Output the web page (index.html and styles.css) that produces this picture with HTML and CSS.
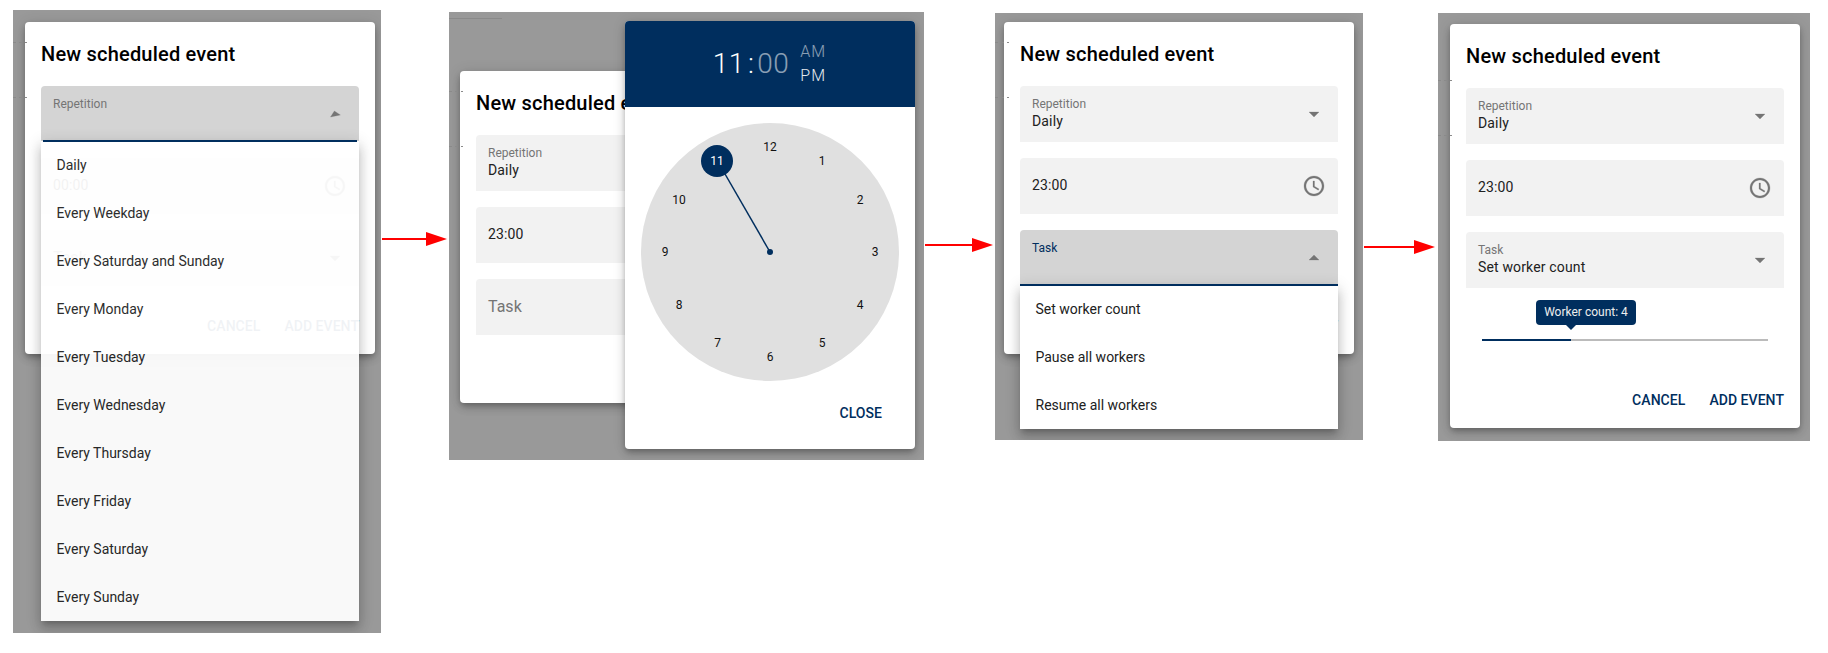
FILE: index.html
```html
<!DOCTYPE html>
<html lang="en">
<head>
    <meta charset="UTF-8">
    <title>New scheduled event</title>
    <link rel="stylesheet" href="styles.css">
</head>
<body>
<div class="strip">

    <!-- step 1: repetition menu opening -->
    <div class="screen screen-one">
        <span class="grid-line" style="top: 32px"></span>
        <span class="grid-line" style="top: 87px"></span>
        <div class="dialog">
            <h2 class="dialog-title">New scheduled event</h2>
            <div class="fields">
                <div class="field active">
                    <span class="field-label">Repetition</span>
                    <svg class="field-icon turning" viewBox="0 0 24 24"><path d="M7 10l5 5 5-5z"/></svg>
                    <span class="underline underline-growing"></span>
                    <ul class="menu menu-fading">
                        <li>Daily</li>
                        <li>Every Weekday</li>
                        <li>Every Saturday and Sunday</li>
                        <li>Every Monday</li>
                        <li>Every Tuesday</li>
                        <li>Every Wednesday</li>
                        <li>Every Thursday</li>
                        <li>Every Friday</li>
                        <li>Every Saturday</li>
                        <li>Every Sunday</li>
                    </ul>
                </div>
                <div class="field">
                    <span class="field-plain">00:00</span>
                    <svg class="field-icon" viewBox="0 0 24 24"><path d="M11.99 2C6.47 2 2 6.48 2 12s4.47 10 9.99 10C17.52 22 22 17.52 22 12S17.52 2 11.99 2zM12 20c-4.42 0-8-3.58-8-8s3.58-8 8-8 8 3.58 8 8-3.58 8-8 8zm.5-13H11v6l5.25 3.15.75-1.23-4.5-2.67z"/></svg>
                </div>
                <div class="field">
                    <span class="field-hint">Task</span>
                    <svg class="field-icon" viewBox="0 0 24 24"><path d="M7 10l5 5 5-5z"/></svg>
                </div>
            </div>
            <div class="actions">
                <button class="text-button">CANCEL</button>
                <button class="text-button">ADD EVENT</button>
            </div>
        </div>
    </div>

    <div class="arrow arrow-one"><span class="arrow-line"></span><span class="arrow-head"></span></div>

    <!-- step 2: time picker -->
    <div class="screen screen-two">
        <span class="grid-line grid-line-solid" style="top: 6px"></span>
        <span class="grid-line" style="top: 79px"></span>
        <span class="grid-line" style="top: 134px"></span>
        <div class="dialog">
            <h2 class="dialog-title">New scheduled event</h2>
            <div class="fields">
                <div class="field">
                    <span class="field-label">Repetition</span>
                    <span class="field-value">Daily</span>
                </div>
                <div class="field">
                    <span class="field-plain">23:00</span>
                </div>
                <div class="field">
                    <span class="field-hint">Task</span>
                </div>
            </div>
            <div class="actions">
                <button class="text-button">CANCEL</button>
                <button class="text-button">ADD EVENT</button>
            </div>
        </div>
        <div class="picker">
            <div class="picker-head">
                <div class="picker-time"><span>11</span><span class="picker-colon">:</span><span class="dim">00</span></div>
                <div class="picker-ampm">
                    <span class="dim">AM</span>
                    <span class="picker-on">PM</span>
                </div>
            </div>
            <svg class="clock" viewBox="0 0 258 258">
                <circle class="clock-face" cx="129" cy="129" r="129"/>
                <line class="clock-hand" x1="129" y1="129" x2="76.5" y2="38"/>
                <circle class="clock-pin" cx="129" cy="129" r="3"/>
                <circle class="clock-pin" cx="76" cy="38" r="16"/>
                <text x="129" y="24">12</text>
                <text x="181" y="38">1</text>
                <text x="219" y="76.5">2</text>
                <text x="234" y="129">3</text>
                <text x="219" y="181.5">4</text>
                <text x="181" y="220">5</text>
                <text x="129" y="234">6</text>
                <text x="76.5" y="220">7</text>
                <text x="38" y="181.5">8</text>
                <text x="24" y="129">9</text>
                <text x="38" y="76.5">10</text>
                <text class="clock-selected" x="76" y="38">11</text>
            </svg>
            <div class="picker-foot">
                <button class="text-button">CLOSE</button>
            </div>
        </div>
    </div>

    <div class="arrow arrow-two"><span class="arrow-line"></span><span class="arrow-head"></span></div>

    <!-- step 3: task menu -->
    <div class="screen screen-three">
        <span class="grid-line" style="top: 29px"></span>
        <span class="grid-line" style="top: 84px"></span>
        <div class="dialog">
            <h2 class="dialog-title">New scheduled event</h2>
            <div class="fields">
                <div class="field">
                    <span class="field-label">Repetition</span>
                    <span class="field-value">Daily</span>
                    <svg class="field-icon" viewBox="0 0 24 24"><path d="M7 10l5 5 5-5z"/></svg>
                </div>
                <div class="field">
                    <span class="field-plain">23:00</span>
                    <svg class="field-icon" viewBox="0 0 24 24"><path d="M11.99 2C6.47 2 2 6.48 2 12s4.47 10 9.99 10C17.52 22 22 17.52 22 12S17.52 2 11.99 2zM12 20c-4.42 0-8-3.58-8-8s3.58-8 8-8 8 3.58 8 8-3.58 8-8 8zm.5-13H11v6l5.25 3.15.75-1.23-4.5-2.67z"/></svg>
                </div>
                <div class="field active">
                    <span class="field-label label-focus">Task</span>
                    <svg class="field-icon" viewBox="0 0 24 24"><path d="M7 14l5-5 5 5z"/></svg>
                    <span class="underline"></span>
                    <ul class="menu">
                        <li>Set worker count</li>
                        <li>Pause all workers</li>
                        <li>Resume all workers</li>
                    </ul>
                </div>
            </div>
            <div class="actions">
                <button class="text-button">CANCEL</button>
                <button class="text-button">ADD EVENT</button>
            </div>
        </div>
    </div>

    <div class="arrow arrow-three"><span class="arrow-line"></span><span class="arrow-head"></span></div>

    <!-- step 4: worker count slider -->
    <div class="screen screen-four">
        <span class="grid-line" style="top: 67px"></span>
        <span class="grid-line" style="top: 122px"></span>
        <div class="dialog">
            <h2 class="dialog-title">New scheduled event</h2>
            <div class="fields">
                <div class="field">
                    <span class="field-label">Repetition</span>
                    <span class="field-value">Daily</span>
                    <svg class="field-icon" viewBox="0 0 24 24"><path d="M7 10l5 5 5-5z"/></svg>
                </div>
                <div class="field">
                    <span class="field-plain">23:00</span>
                    <svg class="field-icon" viewBox="0 0 24 24"><path d="M11.99 2C6.47 2 2 6.48 2 12s4.47 10 9.99 10C17.52 22 22 17.52 22 12S17.52 2 11.99 2zM12 20c-4.42 0-8-3.58-8-8s3.58-8 8-8 8 3.58 8 8-3.58 8-8 8zm.5-13H11v6l5.25 3.15.75-1.23-4.5-2.67z"/></svg>
                </div>
                <div class="field">
                    <span class="field-label">Task</span>
                    <span class="field-value">Set worker count</span>
                    <svg class="field-icon" viewBox="0 0 24 24"><path d="M7 10l5 5 5-5z"/></svg>
                </div>
            </div>
            <div class="slider">
                <div class="slider-track">
                    <div class="slider-fill" style="width: 89px">
                        <span class="tooltip">Worker count: 4</span>
                    </div>
                </div>
            </div>
            <div class="actions">
                <button class="text-button">CANCEL</button>
                <button class="text-button">ADD EVENT</button>
            </div>
        </div>
    </div>

</div>
</body>
</html>
```

FILE: styles.css
```css
body {
    margin: 0;
    background-color: #fff;
    font-family: Roboto, "Liberation Sans", sans-serif;
    color: #212121;
}
.strip {
    display: flex;
    align-items: flex-start;
    padding-left: 13px;
}

/* grey backdrop behind each dialog */
.screen {
    position: relative;
    flex: none;
    box-sizing: border-box;
    background-color: #999;
    overflow: hidden;
}
.screen-one {
    width: 368px;
    height: 623px;
    margin-top: 10px;
    padding: 12px 0 0 12px;
}
.screen-two {
    width: 475px;
    height: 448px;
    margin-top: 12px;
    padding: 59px 0 0 11px;
}
.screen-three {
    width: 368px;
    height: 427px;
    margin-top: 13px;
    padding: 9px 0 0 9px;
}
.screen-four {
    width: 372px;
    height: 428px;
    margin-top: 13px;
    padding: 11px 0 0 12px;
}
.grid-line {
    position: absolute;
    left: 0;
    width: 14px;
    height: 1px;
    background-image: repeating-linear-gradient(90deg, #8a8a8a 0 3px, transparent 3px 6px);
}
.grid-line-solid {
    width: 53px;
    background-image: none;
    background-color: #8a8a8a;
}

/* arrows between the steps */
.arrow {
    flex: none;
    display: flex;
    align-items: center;
    height: 14px;
}
.arrow-one {
    width: 65px;
    margin: 232px 2px 0 1px;
}
.arrow-two {
    width: 68px;
    margin: 238px 2px 0 1px;
}
.arrow-three {
    width: 71px;
    margin: 240px 3px 0 1px;
}
.arrow-line {
    flex: 1;
    height: 2px;
    background-color: #f00;
}
.arrow-head {
    border-left: 21px solid #f00;
    border-top: 7px solid transparent;
    border-bottom: 7px solid transparent;
}

/* dialog */
.dialog {
    width: 350px;
    background-color: #fff;
    border-radius: 4px;
    box-shadow: 0 3px 5px -1px rgba(0, 0, 0, .2), 0 5px 8px 0 rgba(0, 0, 0, .14), 0 1px 14px 0 rgba(0, 0, 0, .12);
}
.dialog-title {
    margin: 0;
    padding: 16px;
    font-size: 20px;
    font-weight: 500;
    line-height: 32px;
    letter-spacing: .2px;
    color: #000;
}
.fields {
    display: flex;
    flex-direction: column;
    gap: 16px;
    margin: 0 16px;
}
.field {
    position: relative;
    height: 56px;
    box-sizing: border-box;
    padding: 0 12px;
    background-color: #f2f2f2;
    border-radius: 4px 4px 0 0;
}
.field.active {
    background-color: #d4d4d4;
}
.field-label {
    display: block;
    padding-top: 11px;
    font-size: 12px;
    line-height: 14px;
    color: #757575;
}
.label-focus {
    color: #002e5e;
}
.field-value {
    display: block;
    margin-top: 1px;
    font-size: 14px;
    line-height: 18px;
    letter-spacing: .15px;
}
.field-plain {
    display: block;
    padding-top: 18px;
    font-size: 14px;
    line-height: 18px;
    letter-spacing: .15px;
}
.field-hint {
    display: block;
    padding-top: 18px;
    font-size: 16px;
    line-height: 20px;
    color: #757575;
}
.field-icon {
    position: absolute;
    top: 16px;
    right: 12.5px;
    width: 24px;
    height: 24px;
    fill: #757575;
    stroke: #757575;
    stroke-width: .25;
}
.turning {
    transform: rotate(168deg);
}
.underline {
    position: absolute;
    z-index: 3;
    left: 0;
    right: 0;
    bottom: 0;
    height: 2px;
    background-color: #002e5e;
}
.underline-growing {
    left: 2px;
    right: 2px;
}

/* dropdown menu */
.menu {
    position: absolute;
    z-index: 2;
    top: 55px;
    left: 0;
    right: 0;
    margin: 0;
    padding: 0;
    list-style: none;
    background-color: #fff;
    box-shadow: 0 5px 5px -3px rgba(0, 0, 0, .2), 0 8px 10px 1px rgba(0, 0, 0, .14), 0 3px 14px 2px rgba(0, 0, 0, .12);
}
.menu li {
    height: 48px;
    padding: 0 15.5px;
    font-size: 14px;
    line-height: 48px;
}
.menu-fading {
    opacity: .94;
}

/* buttons */
.actions {
    display: flex;
    justify-content: flex-end;
    gap: 24px;
    padding: 30px 16px 18px 0;
}
.text-button {
    padding: 0;
    border: none;
    background: none;
    font-family: inherit;
    font-size: 14px;
    font-weight: 500;
    line-height: 20px;
    letter-spacing: .05px;
    color: #002e5e;
}

/* time picker */
.picker {
    position: absolute;
    top: 9px;
    left: 176px;
    width: 290px;
    height: 428px;
    background-color: #fff;
    border-radius: 4px;
    overflow: hidden;
    box-shadow: 0 3px 5px -1px rgba(0, 0, 0, .2), 0 5px 8px 0 rgba(0, 0, 0, .14), 0 1px 14px 0 rgba(0, 0, 0, .12);
}
.picker-head {
    display: flex;
    align-items: center;
    justify-content: center;
    gap: 11px;
    box-sizing: border-box;
    height: 86px;
    padding: 0 1px 2px 0;
    background-color: #002e5e;
    color: #fff;
}
.picker-time {
    font-size: 28px;
    font-weight: 300;
    letter-spacing: .5px;
}
.picker-colon {
    margin: 0 3px;
}
.picker-ampm {
    display: flex;
    flex-direction: column;
    gap: 5px;
    font-size: 16px;
    font-weight: 300;
    line-height: 19px;
    letter-spacing: 1px;
}
.picker-on {
    opacity: .9;
}
.dim {
    opacity: .54;
}
.clock {
    display: block;
    width: 258px;
    height: 258px;
    margin: 16px 16px 0;
}
.clock-face {
    fill: #e0e0e0;
}
.clock-hand {
    stroke: #002e5e;
    stroke-width: 1.5;
}
.clock-pin {
    fill: #002e5e;
}
.clock text {
    font-size: 12px;
    fill: #111;
    text-anchor: middle;
    dominant-baseline: central;
}
.clock .clock-selected {
    fill: #fff;
}
.picker-foot {
    display: flex;
    justify-content: flex-end;
    padding: 22px 33px 0 0;
}

/* worker count slider */
.slider {
    height: 72px;
    box-sizing: border-box;
    padding: 51px 32px 0;
}
.slider-track {
    height: 2px;
    background-color: #bbb;
}
.slider-fill {
    position: relative;
    height: 2px;
    background-color: #002e5e;
}
.tooltip {
    position: absolute;
    right: -65px;
    bottom: 16px;
    width: 100px;
    height: 25px;
    border-radius: 4px;
    background-color: #002e5e;
    color: #eee;
    font-size: 12px;
    line-height: 25px;
    text-align: center;
}
.tooltip::after {
    content: "";
    position: absolute;
    top: 25px;
    left: 30px;
    border-top: 5px solid #002e5e;
    border-left: 5px solid transparent;
    border-right: 5px solid transparent;
}
```
